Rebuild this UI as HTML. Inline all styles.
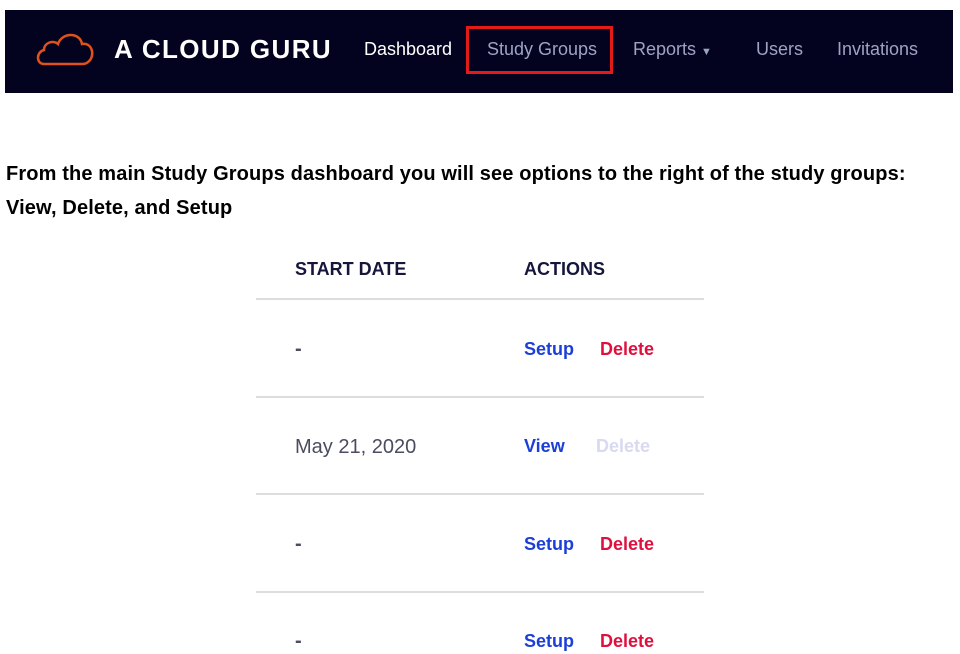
<!DOCTYPE html>
<html><head><style>
body{margin:0;width:960px;height:654px;background:#fff;font-family:"Liberation Sans",sans-serif;position:relative;overflow:hidden}
.nav{position:absolute;left:5px;top:10px;width:948px;height:83px;background:#03031f}
.t{position:absolute;white-space:nowrap}
.navl{color:#c8cde8;font-size:18px;top:39px}
.hr{position:absolute;left:256px;width:448px;height:2px;background:#ddd}
.h{font-weight:bold;color:#15163a;font-size:18px;top:259px}
.blue{color:#1c3fd8;font-weight:bold;font-size:18px}
.red{color:#e0103e;font-weight:bold;font-size:18px}
.gray{color:#4a4d60;font-size:20px}
</style></head><body>
<div class="nav"></div>
<svg class="t" style="left:34px;top:28px" width="64" height="40" viewBox="0 0 64 40"><path d="M10 36 C2 36 2 24 10 22 C10 14 20 12 24 16 C28 4 46 4 48 16 C58 14 62 28 54 34 C52 36 50 36 48 36 Z" fill="none" stroke="#e0521c" stroke-width="2.5"/></svg>
<div class="t" style="left:114px;top:34px;color:#fff;font-size:26px;font-weight:bold;letter-spacing:1.4px">A CLOUD GURU</div>
<div class="t navl" style="left:364px;color:#fff">Dashboard</div>
<div class="t" style="left:466px;top:26px;width:141px;height:42px;border:3px solid #e41a1a"></div>
<div class="t navl" style="left:487px;color:#9ea3c4">Study Groups</div>
<div class="t navl" style="left:633px;color:#9ea3c4">Reports <span style="font-size:11px">▼</span></div>
<div class="t navl" style="left:756px;color:#9ea3c4">Users</div>
<div class="t navl" style="left:837px;color:#9ea3c4">Invitations</div>
<div class="t" style="left:6px;top:157px;font-size:20px;font-weight:bold;color:#000;line-height:34px;letter-spacing:0.13px">From the main Study Groups dashboard you will see options to the right of the study groups:<br>View, Delete, and Setup</div>
<div class="t h" style="left:295px">START DATE</div>
<div class="t h" style="left:524px">ACTIONS</div>
<div class="hr" style="top:298px"></div>
<div class="t gray" style="left:295px;top:338px;font-weight:bold">-</div>
<div class="t blue" style="left:524px;top:339px">Setup</div><div class="t red" style="left:600px;top:339px">Delete</div>
<div class="hr" style="top:396px"></div>
<div class="t gray" style="left:295px;top:436px">May 21, 2020</div>
<div class="t blue" style="left:524px;top:436px">View</div><div class="t red" style="left:596px;top:436px;color:#d7daf0">Delete</div>
<div class="hr" style="top:493px"></div>
<div class="t gray" style="left:295px;top:533px;font-weight:bold">-</div>
<div class="t blue" style="left:524px;top:534px">Setup</div><div class="t red" style="left:600px;top:534px">Delete</div>
<div class="hr" style="top:591px"></div>
<div class="t gray" style="left:295px;top:630px;font-weight:bold">-</div>
<div class="t blue" style="left:524px;top:631px">Setup</div><div class="t red" style="left:600px;top:631px">Delete</div>
</body></html>
